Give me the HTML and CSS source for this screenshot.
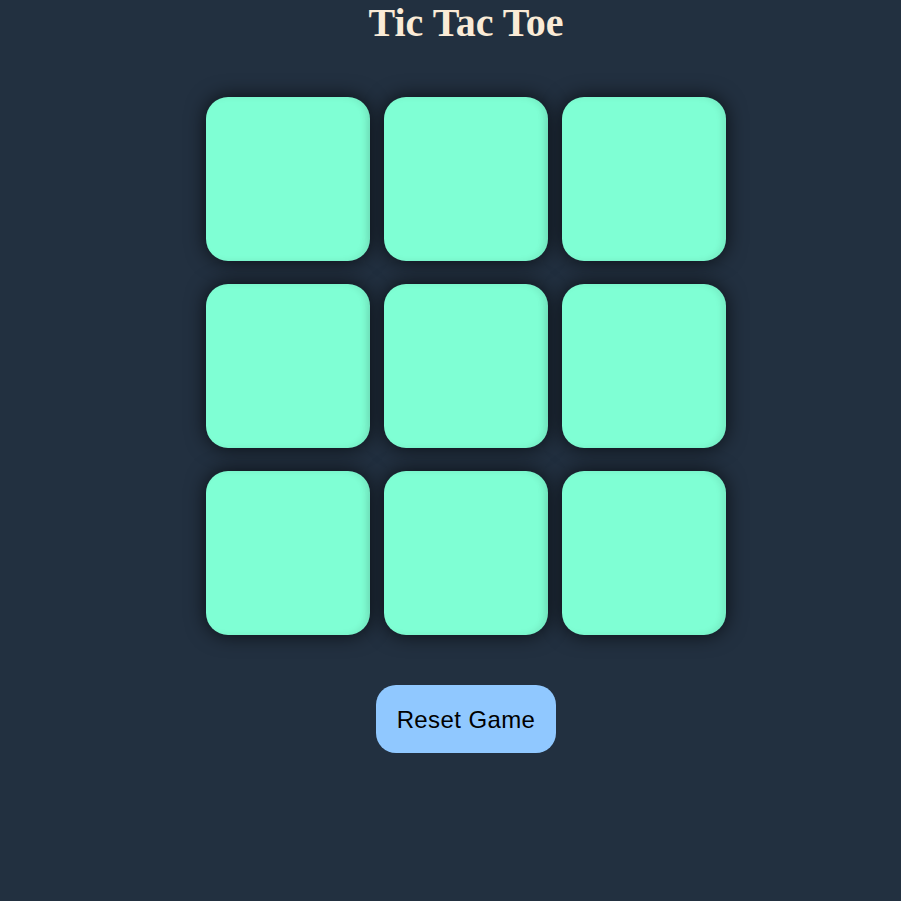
FILE: index.html
```html
<!DOCTYPE html>
<html>
<head>
<meta charset="utf-8">
<link rel="stylesheet" href="styles.css">
</head>
<body>
<main class="game">
  <h1 class="title">Tic Tac Toe</h1>
  <div class="board">
    <button class="cell"></button>
    <button class="cell"></button>
    <button class="cell"></button>
    <button class="cell"></button>
    <button class="cell"></button>
    <button class="cell"></button>
    <button class="cell"></button>
    <button class="cell"></button>
    <button class="cell"></button>
  </div>
  <button class="reset">Reset Game</button>
</main>
</body>
</html>
```
FILE: styles.css
```css
html, body {
  margin: 0;
  padding: 0;
  background: #223040;
  height: 100%;
}
.game {
  display: flex;
  flex-direction: column;
  align-items: center;
  padding-left: 31px;
}
.title {
  margin: 0;
  font-family: "Liberation Serif", "Times New Roman", serif;
  font-weight: bold;
  font-size: 40px;
  line-height: 46px;
  color: #faebd7;
}
.board {
  margin-top: 51px;
  display: grid;
  grid-template-columns: repeat(3, 164px);
  grid-template-rows: repeat(3, 164px);
  column-gap: 14px;
  row-gap: 23px;
}
.cell {
  border: none;
  padding: 0;
  border-radius: 22px;
  background: #7fffd4;
  box-shadow: 0 0 20px rgba(0, 0, 0, 0.7), inset -4px 0 6px rgba(0, 0, 0, 0.08);
}
.reset {
  margin-top: 50px;
  width: 180px;
  height: 68px;
  border: none;
  border-radius: 20px;
  background: #90c8ff;
  color: #000;
  font-family: "Liberation Sans", Arial, sans-serif;
  font-size: 24px;
  letter-spacing: 0.4px;
  padding: 2px 0 0;
}
```
